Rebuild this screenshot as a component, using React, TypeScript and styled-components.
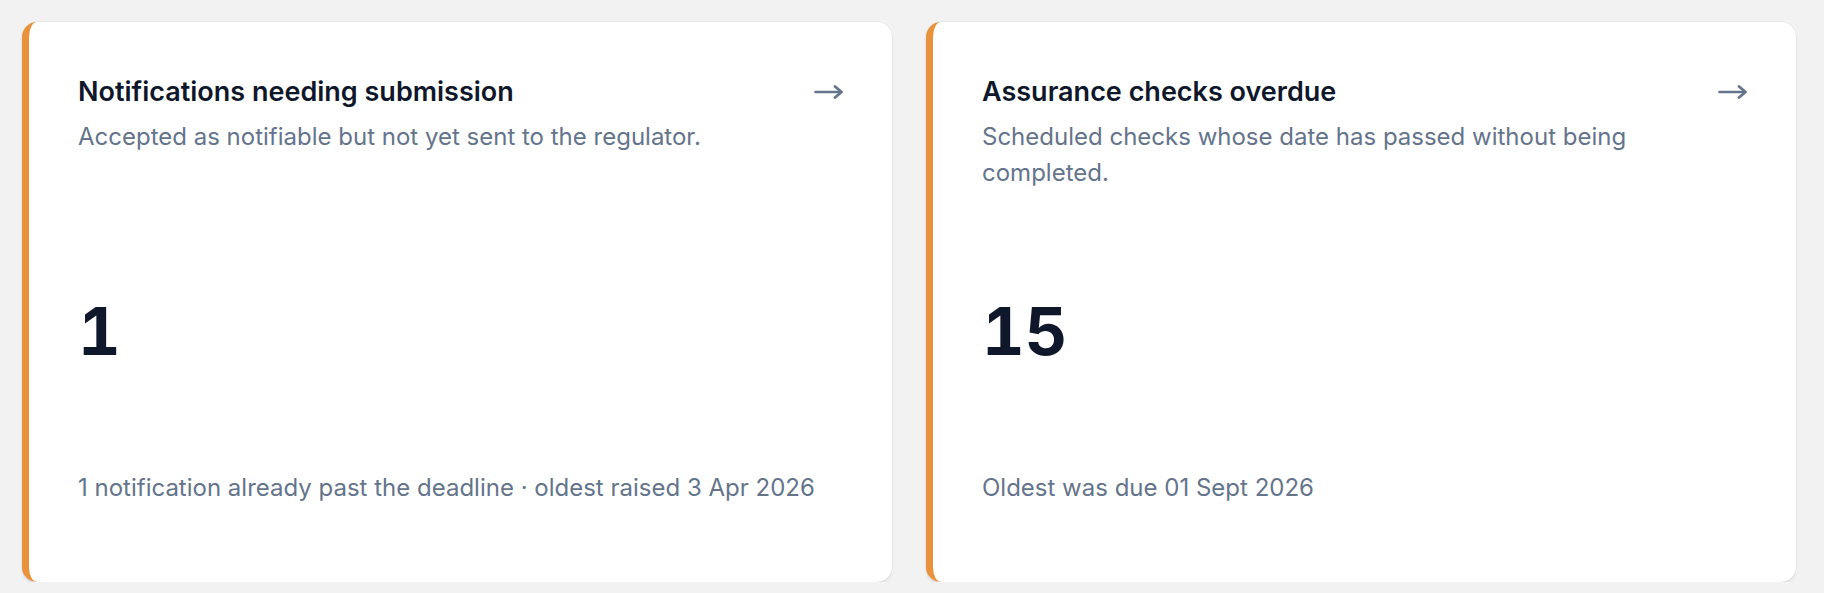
import React from 'react';
import styled, { createGlobalStyle } from 'styled-components';

const GlobalStyle = createGlobalStyle`
  html, body {
    margin: 0;
    padding: 0;
    background: #f2f2f3;
  }
  body {
    font-family: Inter, "Noto Sans", "Liberation Sans", sans-serif;
    -webkit-font-smoothing: antialiased;
  }
`;

type Tile = {
  title: string;
  description: string;
  count: number;
  footnote: string;
};

const tiles: Tile[] = [
  {
    title: 'Notifications needing submission',
    description: 'Accepted as notifiable but not yet sent to the regulator.',
    count: 1,
    footnote: '1 notification already past the deadline \u00b7 oldest raised 3 Apr 2026',
  },
  {
    title: 'Assurance checks overdue',
    description: 'Scheduled checks whose date has passed without being completed.',
    count: 15,
    footnote: 'Oldest was due 01 Sept 2026',
  },
];

const ArrowIcon = () => (
  <svg width="30" height="16" viewBox="0 0 30 16" fill="none" aria-hidden="true">
    <path d="M1.5 8H27" stroke="currentColor" strokeWidth="2.6" strokeLinecap="round" />
    <path
      d="M21 2.5L27.5 8L21 13.5"
      stroke="currentColor"
      strokeWidth="2.8"
      strokeLinecap="round"
      strokeLinejoin="round"
    />
  </svg>
);

export default function App() {
  return (
    <>
      <GlobalStyle />
      <Grid>
        {tiles.map((t) => (
          <Card key={t.title} $accent="#e9923b">
            <Header>
              <Title>{t.title}</Title>
              <Arrow>
                <ArrowIcon />
              </Arrow>
            </Header>
            <Description>{t.description}</Description>
            <Middle>
              <Count>{t.count}</Count>
            </Middle>
            <Footnote>{t.footnote}</Footnote>
          </Card>
        ))}
      </Grid>
    </>
  );
}

const Grid = styled.div`
  display: grid;
  grid-template-columns: 1fr 1fr;
  gap: 34px;
  padding: 22px 28px 0 22px;
`;

const Card = styled.div<{ $accent: string }>`
  box-sizing: border-box;
  height: 560px;
  display: flex;
  flex-direction: column;
  background: #ffffff;
  border-left: 7px solid ${(p) => p.$accent};
  border-radius: 15px;
  box-shadow: 0 0 0 1px rgba(15, 23, 42, 0.035), 0 3px 3px rgba(15, 23, 42, 0.06);
  padding: 50px 48px 76px 49px;
`;

const Header = styled.div`
  display: flex;
  align-items: center;
  justify-content: space-between;
  gap: 24px;
`;

const Title = styled.h3`
  margin: 0;
  font-size: 27px;
  line-height: 40px;
  font-weight: 600;
  color: #0f172a;
`;

const Arrow = styled.span`
  display: flex;
  color: #64748b;
  flex-shrink: 0;
`;

const Description = styled.p`
  margin: 7px 0 0;
  min-height: 72px;
  max-width: 680px;
  font-size: 24px;
  line-height: 36px;
  color: #64748b;
`;

const Middle = styled.div`
  flex: 1;
  display: flex;
  align-items: center;
`;

const Count = styled.div`
  font-size: 66px;
  line-height: 66px;
  font-weight: 700;
  font-variant-numeric: tabular-nums;
  color: #0f172a;
`;

const Footnote = styled.div`
  font-size: 24px;
  line-height: 36px;
  color: #64748b;
`;
